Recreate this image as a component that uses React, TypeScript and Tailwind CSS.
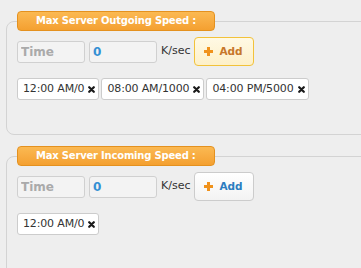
import React from 'react';

type Rule = { time: string; speed: string };

interface SpeedBoxProps {
  title: string;
  rules: Rule[];
  hovered?: boolean;
  last?: boolean;
}

function PlusIcon() {
  return (
    <svg width="9" height="9" viewBox="0 0 9 9" className="shrink-0">
      <rect x="3" y="0" width="3" height="9" fill="#f0921c" />
      <rect x="0" y="3" width="9" height="3" fill="#f0921c" />
    </svg>
  );
}

function RemoveIcon() {
  return (
    <svg width="7" height="7" viewBox="0 0 7 7" className="ml-[4px] shrink-0">
      <path d="M1.2 1.2 L5.8 5.8 M5.8 1.2 L1.2 5.8" stroke="#1a1a1a" strokeWidth="2.2" strokeLinecap="round" />
    </svg>
  );
}

function SpeedBox({ title, rules, hovered, last }: SpeedBoxProps) {
  return (
    <fieldset
      className={`ml-[6px] mt-[11px] w-[420px] rounded-[8px] border border-[#d3d3d3] pl-[10px] pt-[6px] ${
        last ? 'pb-[80px]' : 'pb-[34px]'
      }`}
    >
      <legend className="h-[20px] rounded-[4px] border border-[#e4911f] bg-gradient-to-b from-[#fbb952] to-[#f4a030] px-[18px] text-[10px] font-bold leading-[18px] tracking-[-0.2px] text-white">
        {title}
      </legend>

      {/* Input row */}
      <div className="flex h-[29px] items-center">
        <input
          type="text"
          placeholder="Time"
          className="h-[22px] w-[68px] rounded-[3px] border border-[#d0d0d0] bg-[#f3f3f3] px-[3px] text-[12px] font-bold text-[#555] placeholder:text-[#aaaaaa] focus:outline-none"
        />
        <input
          type="text"
          defaultValue="0"
          className="ml-[4px] h-[22px] w-[68px] rounded-[3px] border border-[#d0d0d0] bg-[#f3f3f3] px-[3px] text-[12px] font-bold text-[#3590d3] focus:outline-none"
        />
        <span className="ml-[4px] text-[11px] text-[#333]">K/sec</span>
        <button
          className={`ml-[4px] flex h-[29px] w-[60px] items-center rounded-[4px] border pl-[9px] text-[10.5px] font-bold ${
            hovered
              ? 'border-[#f2c23a] bg-gradient-to-b from-[#fff9e4] to-[#fdf0c9] text-[#c7772a]'
              : 'border-[#cccccc] bg-gradient-to-b from-white to-[#f3f3f3] text-[#2c7dc0]'
          }`}
        >
          <PlusIcon />
          <span className="ml-[6px]">Add</span>
        </button>
      </div>

      {/* Rules */}
      <div className="mt-[12px] flex gap-[2px]">
        {rules.map((r) => (
          <div
            key={r.time}
            className="flex h-[22px] items-center rounded-[3px] border border-[#cccccc] bg-white pl-[5px] pr-[3px] text-[11px] tracking-[-0.15px] text-[#333]"
          >
            {r.time}/{r.speed}
            <RemoveIcon />
          </div>
        ))}
      </div>
    </fieldset>
  );
}

export default function App() {
  return (
    <div
      className="h-[268px] w-[361px] overflow-hidden bg-[#eeeeee]"
      style={{ fontFamily: '"DejaVu Sans", Verdana, sans-serif' }}
    >
      <SpeedBox
        title="Max Server Outgoing Speed :"
        hovered
        rules={[
          { time: '12:00 AM', speed: '0' },
          { time: '08:00 AM', speed: '1000' },
          { time: '04:00 PM', speed: '5000' },
        ]}
      />
      <SpeedBox title="Max Server Incoming Speed :" last rules={[{ time: '12:00 AM', speed: '0' }]} />
    </div>
  );
}
